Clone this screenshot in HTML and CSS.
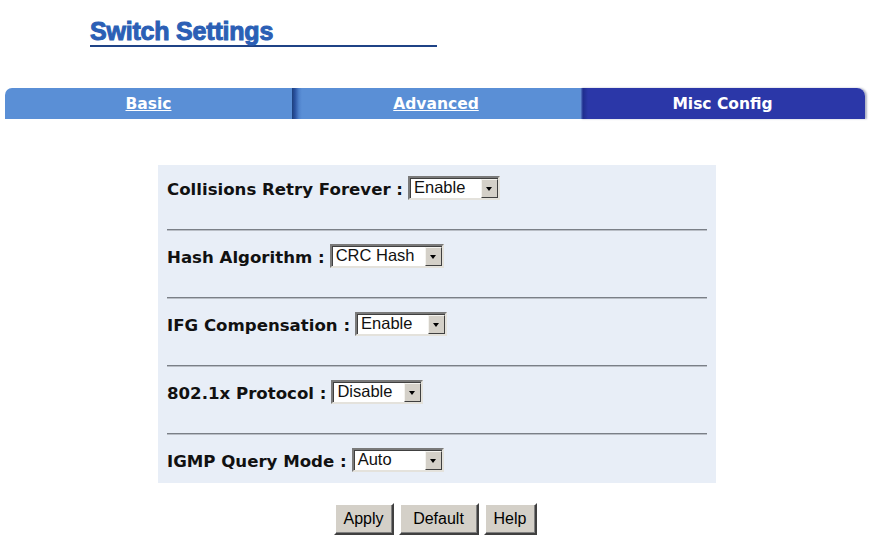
FILE: index.html
```html
<!DOCTYPE html>
<html>
<head>
<meta charset="utf-8">
<link rel="stylesheet" href="styles.css">
</head>
<body>
<div class="header"><span class="title">Switch Settings</span></div>
<div class="tabs">
  <div class="tab tab-basic"><a href="#">Basic</a></div>
  <div class="tab tab-adv"><a href="#">Advanced</a></div>
  <div class="tab tab-misc"><span>Misc Config</span></div>
</div>
<div class="panel">
  <div class="row"><span class="label">Collisions Retry Forever :</span><div class="sel w92"><span class="val">Enable</span><span class="arrow"></span></div></div>
  <div class="sep"></div>
  <div class="row"><span class="label">Hash Algorithm :</span><div class="sel w114"><span class="val">CRC Hash</span><span class="arrow"></span></div></div>
  <div class="sep"></div>
  <div class="row"><span class="label">IFG Compensation :</span><div class="sel w92"><span class="val">Enable</span><span class="arrow"></span></div></div>
  <div class="sep"></div>
  <div class="row"><span class="label">802.1x Protocol :</span><div class="sel w92"><span class="val">Disable</span><span class="arrow"></span></div></div>
  <div class="sep"></div>
  <div class="row"><span class="label">IGMP Query Mode :</span><div class="sel w92"><span class="val">Auto</span><span class="arrow"></span></div></div>
</div>
<div class="buttons">
  <button class="btn b-apply">Apply</button>
  <button class="btn b-default">Default</button>
  <button class="btn b-help">Help</button>
</div>
</body>
</html>
```
FILE: styles.css
```css
html, body { margin: 0; padding: 0; background: #fff; }
body { width: 884px; height: 548px; overflow: hidden; font-family: "DejaVu Sans", Verdana, sans-serif; }

.header { padding-top: 17px; padding-left: 90px; }
.title {
  display: block;
  width: 347px;
  height: 28px;
  line-height: 28px;
  font-family: "Liberation Sans", Arial, sans-serif;
  font-weight: bold;
  font-size: 25px;
  letter-spacing: -0.2px;
  color: #2b5fb5;
  -webkit-text-stroke: 1px #2b5fb5;
  border-bottom: 2px solid #1f4386;
}

.tabs { display: flex; margin: 41px 0 0 5px; width: 860px; height: 31px; }
.tab { height: 31px; display: flex; align-items: center; justify-content: center; font-weight: bold; font-size: 15.5px; color: #fff; }
.tab a { color: #fff; text-decoration: underline; }
.tab-basic { width: 287px; background: #5a8fd6; border-top-left-radius: 7px; }
.tab-adv { width: 288px; background: linear-gradient(to right, #1d3f7c 0px, #2a52a0 3px, #4f82cc 7px, #5a8fd6 10px); }
.tab-misc { width: 285px; background: linear-gradient(to right, #6f9fe0 0px, #1f2d8e 3px, #2b37a8 8px); border-top-right-radius: 8px; box-shadow: 2px 0 2px rgba(30,40,90,0.35); }

.panel { margin: 46px 0 0 158px; width: 558px; background: #e8eef7; }
.row { height: 46px; display: flex; align-items: center; padding-left: 9px; }
.label { font-weight: bold; font-size: 16.6px; color: #111; margin-right: 5px; padding-top: 3px; }
.sep { margin: 18px 9px 2px; border-top: 1px solid #7a7f87; border-bottom: 1px solid #b9bec6; }

.sel {
  box-sizing: border-box;
  height: 24px;
  display: flex;
  align-items: stretch;
  background: #fff;
  border: 2px solid;
  border-color: #7a7a7a #e4e2dc #e4e2dc #7a7a7a;
  box-shadow: inset 1px 1px 0 #404040;
}
.w92 { width: 92px; }
.w114 { width: 114px; }
.val { flex: 1; font-family: "Liberation Sans", Arial, sans-serif; font-size: 16.5px; line-height: 19px; padding: 0 0 0 4px; color: #111; }
.arrow {
  width: 17px;
  box-sizing: border-box;
  background: #d4d0c8;
  border: 1px solid;
  border-color: #f4f3ef #404040 #404040 #f4f3ef;
  margin: 1px 0 0 0;
  position: relative;
}
.arrow::after {
  content: "";
  position: absolute;
  left: 4px;
  top: 7px;
  border-left: 3.5px solid transparent;
  border-right: 3.5px solid transparent;
  border-top: 4px solid #000;
}

.buttons { display: flex; gap: 5px; margin: 20px 0 0 156px; width: 558px; justify-content: center; }
.btn {
  box-sizing: border-box;
  height: 32px;
  padding: 0;
  background: #d4d0c8;
  border: 2px solid;
  border-color: #fff #404040 #404040 #fff;
  box-shadow: inset -1px -1px 0 #808080;
  font-family: "Liberation Sans", Arial, sans-serif;
  font-size: 16px;
  color: #000;
}
.b-apply { width: 60px; }
.b-default { width: 80px; }
.b-help { width: 53px; }
```
